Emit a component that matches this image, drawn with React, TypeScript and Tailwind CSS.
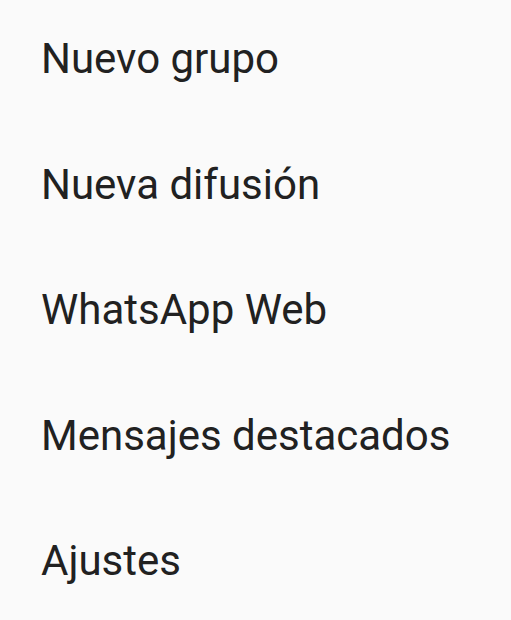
const items = ["Nuevo grupo", "Nueva difusión", "WhatsApp Web", "Mensajes destacados", "Ajustes"];

export default function App() {
  return (
    <div className="w-[511px] h-[620px] bg-[#fafafa] overflow-hidden pt-[29px]" style={{ fontFamily: "Roboto, sans-serif" }}>
      <ul className="flex flex-col">
        {items.map((item) => (
          <li key={item} className="h-[125.5px] pl-[41px] text-[42px] leading-[60px] text-[#212121]">
            {item}
          </li>
        ))}
      </ul>
    </div>
  );
}
